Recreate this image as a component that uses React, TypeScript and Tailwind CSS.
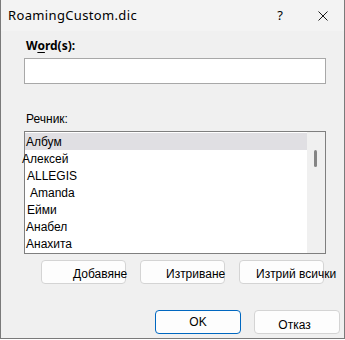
export default function App() {
  const items = [
    { text: "Албум", cls: "ml-[1px]", selected: true },
    { text: "Алексей", cls: "ml-[-3px]", selected: false },
    { text: "ALLEGIS", cls: "ml-[2px]", selected: false },
    { text: "Amanda", cls: "ml-[5px]", selected: false },
    { text: "Ейми", cls: "ml-[2px]", selected: false },
    { text: "Анабел", cls: "ml-[1px]", selected: false },
    { text: "Анахита", cls: "ml-[1px]", selected: false },
  ];

  return (
    <div className="w-[345px] h-[340px] bg-white">
      <div className="w-[345px] h-[339px] bg-[#f0f0f0] border-l border-r border-b border-[#7a7a7a] flex flex-col font-['Liberation_Sans',Arial,sans-serif] text-[12px] text-black">
        {/* Title bar */}
        <div className="h-[31px] flex items-center bg-[#f3f3f3] pl-[7px] shrink-0">
          <span className="font-['Noto_Sans',sans-serif] text-[13px] tracking-[0.35px] leading-none">RoamingCustom.dic</span>
          <span className="ml-auto font-['Noto_Sans',sans-serif] text-[13px] leading-none mr-[35px]">?</span>
          <svg width="10" height="10" viewBox="0 0 10 10" className="mr-[16px]">
            <path d="M0.5 0.5L9.5 9.5M9.5 0.5L0.5 9.5" stroke="#1a1a1a" strokeWidth="1" />
          </svg>
        </div>

        {/* Body */}
        <div className="pl-[23px] flex flex-col">
          <div className="mt-[7px] h-[16px] leading-[16px] ml-[2px] font-['Noto_Sans',sans-serif] font-bold text-[12px]">
            W<span className="underline underline-offset-2">o</span>rd(s):
          </div>
          <div className="mt-[4px] w-[302px] h-[26px] bg-white border border-[#a8a8a8]" />

          <div className="mt-[28px] h-[14px] leading-[14px] ml-[2px]">Речник:</div>

          <div className="mt-[5px] w-[302px] h-[123px] bg-white border border-[#7f7f7f] flex">
            <div className="w-[282px] pt-[1px] flex flex-col">
              {items.map((it) => (
                <div
                  key={it.text}
                  className={`h-[17px] leading-[18px] flex ${it.selected ? "bg-[#e0dfe3]" : ""}`}
                >
                  <span className={it.cls}>{it.text}</span>
                </div>
              ))}
            </div>
            <div className="w-[18px] bg-[#f0f0f0]">
              <div className="mt-[18px] ml-[7px] w-[3px] h-[17px] rounded-full bg-[#858585]" />
            </div>
          </div>

          <div className="mt-[6px] ml-[17px] flex gap-[14px]">
            <button className="w-[85px] h-[24px] bg-[#fdfdfd] border border-[#d4d4d4] rounded-[4px] text-left pl-[31px] pt-[3px] whitespace-nowrap">
              Добавяне
            </button>
            <button className="w-[85px] h-[24px] bg-[#fdfdfd] border border-[#d4d4d4] rounded-[4px] text-left pl-[25px] pt-[3px] whitespace-nowrap">
              Изтриване
            </button>
            <button className="w-[85px] h-[24px] bg-[#fdfdfd] border border-[#d4d4d4] rounded-[4px] text-left pl-[16px] pt-[3px] whitespace-nowrap overflow-visible">
              Изтрий всички
            </button>
          </div>

          <div className="mt-[26px] ml-[131px] flex gap-[13px]">
            <button className="w-[86px] h-[24px] bg-[#fdfdfd] border-[1.5px] border-[#0067c0] rounded-[4px]">
              OK
            </button>
            <button className="w-[86px] h-[24px] bg-[#fdfdfd] border border-[#d4d4d4] rounded-[4px] pt-[5px] pr-[5px]">
              Отказ
            </button>
          </div>
        </div>
      </div>
    </div>
  );
}
